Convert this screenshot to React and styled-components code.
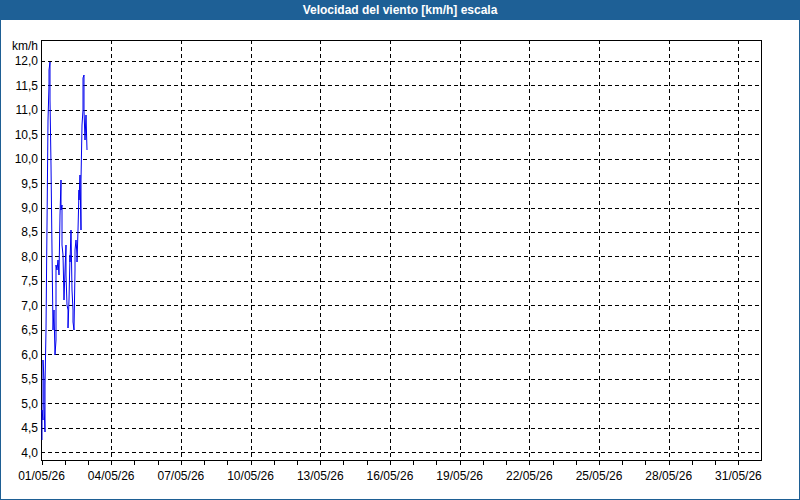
import React from "react";
import styled, { createGlobalStyle } from "styled-components";

const Global = createGlobalStyle`
  html, body { margin: 0; padding: 0; background: #fff; }
`;

const Frame = styled.div`
  width: 800px; height: 500px; box-sizing: border-box;
  border: 1px solid #1e5f94; border-top: none;
  display: flex; flex-direction: column; background: #fff;
  font-family: "Liberation Sans", Arial, sans-serif;
`;
const Title = styled.div`
  height: 20px; background: #1e6096; color: #fff;
  font-size: 12px; font-weight: bold;
  display: flex; align-items: center; justify-content: center;
  margin: 0 -1px;
`;
const Chart = styled.svg`
  display: block; flex: 1;
`;

const X0 = 40, X1 = 760, Y0 = 40, Y1 = 460;
const yOf = (v) => 452 - (v - 4) * 48.9;
const xOf = (d) => 40.5 + (d - 1) * 23.23;

const pts = [[41,440],[41,410],[42,420],[42,360],[43,380],[43,405],[44,432],[44,385],[45,330],[46,225],[47,120],[48,85],[48,70],[49,62],[49,100],[50,165],[51,250],[52,330],[53,310],[54,355],[55,340],[55,265],[56,270],[57,260],[58,275],[59,215],[60,180],[60,210],[61,205],[61,245],[62,255],[63,300],[64,270],[65,245],[65,275],[66,305],[67,310],[67,328],[68,300],[69,255],[69,262],[70,230],[71,290],[72,310],[72,322],[73,330],[74,270],[74,250],[75,240],[76,255],[76,262],[77,230],[78,190],[78,200],[79,175],[80,230],[80,180],[81,125],[82,110],[82,78],[83,75],[83,110],[84,140],[85,115],[86,150]];

export default function App() {
  const vals = [];
  for (let i = 0; i <= 16; i++) vals.push(4 + i * 0.5);
  const days = [];
  for (let d = 1; d <= 31; d++) days.push(d);
  const labels = [1,4,7,10,13,16,19,22,25,28,31];
  return (
    <>
      <Global />
      <Frame>
        <Title>Velocidad del viento [km/h] escala</Title>
        <Chart viewBox="0 20 798 479" width="798" height="479">
          <g stroke="#000" strokeWidth="1" strokeDasharray="4 3" shapeRendering="crispEdges">
            {vals.map((v) => (
              <line key={v} x1={X0} x2={X1} y1={Math.round(yOf(v)) + 0.5} y2={Math.round(yOf(v)) + 0.5} />
            ))}
            {labels.slice(1).map((d) => (
              <line key={d} x1={Math.round(xOf(d)) + 0.5} x2={Math.round(xOf(d)) + 0.5} y1={Y0} y2={Y1} />
            ))}
          </g>
          <g stroke="#000" shapeRendering="crispEdges">
            <rect x={X0 + 0.5} y={Y0 + 0.5} width={X1 - X0} height={Y1 - Y0} fill="none" />
            {days.map((d) => (
              <line key={d} x1={Math.round(xOf(d)) + 0.5} x2={Math.round(xOf(d)) + 0.5} y1={Y1} y2={Y1 + 5} />
            ))}
          </g>
          <polyline points={pts.map((p) => p.join(",")).join(" ")} fill="none" stroke="#0000ee" strokeWidth="1" />
          <g fontFamily="Liberation Sans, Arial, sans-serif" fontSize="12" fill="#000">
            <text x="37" y="50" textAnchor="end">km/h</text>
            {vals.map((v) => (
              <text key={v} x="37" y={yOf(v) + 4.5} textAnchor="end">{v.toFixed(1).replace(".", ",")}</text>
            ))}
            {labels.map((d) => (
              <text key={d} x={xOf(d)} y="480" textAnchor="middle">{String(d).padStart(2, "0")}/05/26</text>
            ))}
          </g>
        </Chart>
      </Frame>
    </>
  );
}
